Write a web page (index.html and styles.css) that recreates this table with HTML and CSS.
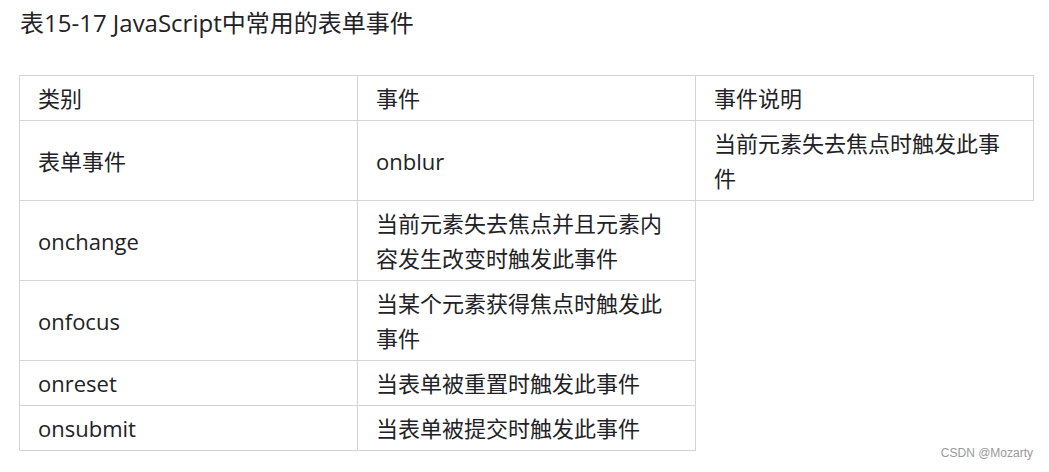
FILE: index.html
```html
<!DOCTYPE html>
<html lang="zh-CN">
<head>
<meta charset="utf-8">
<title>表15-17</title>
<link rel="stylesheet" href="styles.css">
</head>
<body>
<div class="page">
  <p class="caption">表15-17 JavaScript中常用的表单事件</p>
  <table class="events">
    <tr>
      <td>类别</td>
      <td>事件</td>
      <td>事件说明</td>
    </tr>
    <tr class="tall">
      <td>表单事件</td>
      <td>onblur</td>
      <td>当前元素失去焦点时触发此事件</td>
    </tr>
    <tr>
      <td>onchange</td>
      <td>当前元素失去焦点并且元素内容发生改变时触发此事件</td>
    </tr>
    <tr>
      <td>onfocus</td>
      <td>当某个元素获得焦点时触发此事件</td>
    </tr>
    <tr>
      <td>onreset</td>
      <td>当表单被重置时触发此事件</td>
    </tr>
    <tr>
      <td>onsubmit</td>
      <td>当表单被提交时触发此事件</td>
    </tr>
  </table>
</div>
<div class="watermark">CSDN @Mozarty</div>
</body>
</html>
```
FILE: styles.css
```css
html, body {
  margin: 0;
  padding: 0;
  background: #ffffff;
}

body {
  font-family: "Open Sans", "Noto Sans CJK SC", sans-serif;
  color: #222226;
  width: 1049px;
  height: 472px;
  overflow: hidden;
  position: relative;
}

.page {
  padding: 5px 0 0 19px;
}

.caption {
  margin: 0 0 35px 1px;
  font-size: 24px;
  line-height: 35px;
}

.events {
  border-collapse: collapse;
  table-layout: fixed;
  width: 1015px;
  font-size: 22px;
  line-height: 35px;
}

.events td {
  width: 301px;
  border: 1px solid #d4d4d4;
  padding: 5px 18px 4px 18px;
  vertical-align: middle;
  word-break: break-all;
}

.watermark {
  position: absolute;
  right: 16px;
  bottom: 12px;
  font-family: "Liberation Sans", sans-serif;
  font-size: 12px;
  color: #9a9a9a;
}
```
